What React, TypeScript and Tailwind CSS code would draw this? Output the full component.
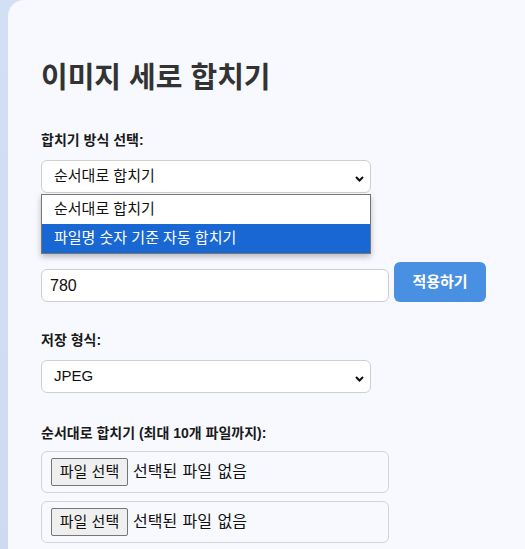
import React from 'react';

const FONT = { fontFamily: '"Liberation Sans", "Noto Sans CJK KR", sans-serif' };

// small bold chevron like the native select arrow
const Chevron: React.FC = () => (
  <svg width="9" height="6" viewBox="0 0 9 6" className="absolute right-[6px] top-[15px]">
    <path d="M1 1 L4.5 4.5 L8 1" fill="none" stroke="#111" strokeWidth="2" />
  </svg>
);

const FakeSelect: React.FC<{ value: string; children?: React.ReactNode }> = ({ value, children }) => (
  <div className="relative w-[330px] h-[33px] bg-white border border-[#cfcfcf] rounded-[6px]">
    <span className="absolute left-[12px] top-0 h-full flex items-center text-[15px] text-[#111]">{value}</span>
    <Chevron />
    {children}
  </div>
);

const FileBox: React.FC = () => (
  <div className="w-[348px] h-[42px] border border-[#d4d4d4] rounded-[6px] flex items-center pl-[9px] gap-[5px]">
    <div className="h-[28px] w-[77px] bg-[#efefef] border border-[#767676] rounded-[2px] flex items-center justify-center text-[15px] text-[#111]">
      파일 선택
    </div>
    <span className="text-[16px] text-[#111] [word-spacing:1px]">선택된 파일 없음</span>
  </div>
);

export default function App() {
  return (
    <div className="w-[525px] h-[549px] overflow-hidden bg-gradient-to-br from-[#d3dff3] to-[#c9d6ee]" style={FONT}>
      <div className="ml-2 h-full bg-[#f7f9fe] rounded-tl-[16px] pl-[33px] flex flex-col">
        <h1 className="mt-[62px] text-[29px] leading-[33px] font-bold text-[#333]">이미지 세로 합치기</h1>

        <label className="mt-[35px] text-[14px] leading-[20px] font-bold text-[#1a1a1a]">합치기 방식 선택:</label>
        <div className="mt-[10px]">
          <FakeSelect value="순서대로 합치기">
            <div className="absolute left-[-1px] top-[33px] w-[330px] h-[60px] bg-white border border-[#767676] shadow-[0_3px_6px_rgba(0,0,0,0.25)] z-10 flex flex-col">
              <div className="h-[29px] pl-[12px] flex items-center text-[15px] text-[#111]">순서대로 합치기</div>
              <div className="h-[29px] pl-[12px] flex items-center text-[15px] text-white bg-[#1967d2]">
                파일명 숫자 기준 자동 합치기
              </div>
            </div>
          </FakeSelect>
        </div>

        {/* width label sits under the open list */}
        <div className="mt-[30px] h-[20px]" />
        <div className="mt-[19px] flex items-end gap-[5px]">
          <div className="w-[348px] h-[33px] bg-white border border-[#cfcfcf] rounded-[6px] flex items-center pl-[8px] text-[16px] text-[#111]">
            780
          </div>
          <button className="w-[92px] h-[40px] bg-[#4a90e2] rounded-[6px] text-white text-[15px] font-semibold">
            적용하기
          </button>
        </div>

        <label className="mt-[28px] text-[14px] leading-[20px] font-bold text-[#1a1a1a]">저장 형식:</label>
        <div className="mt-[10px]">
          <FakeSelect value="JPEG" />
        </div>

        <label className="mt-[30px] text-[14px] leading-[20px] font-bold text-[#1a1a1a]">
          순서대로 합치기 (최대 10개 파일까지):
        </label>
        <div className="mt-[8px] flex flex-col gap-[8px]">
          <FileBox />
          <FileBox />
        </div>
      </div>
    </div>
  );
}
